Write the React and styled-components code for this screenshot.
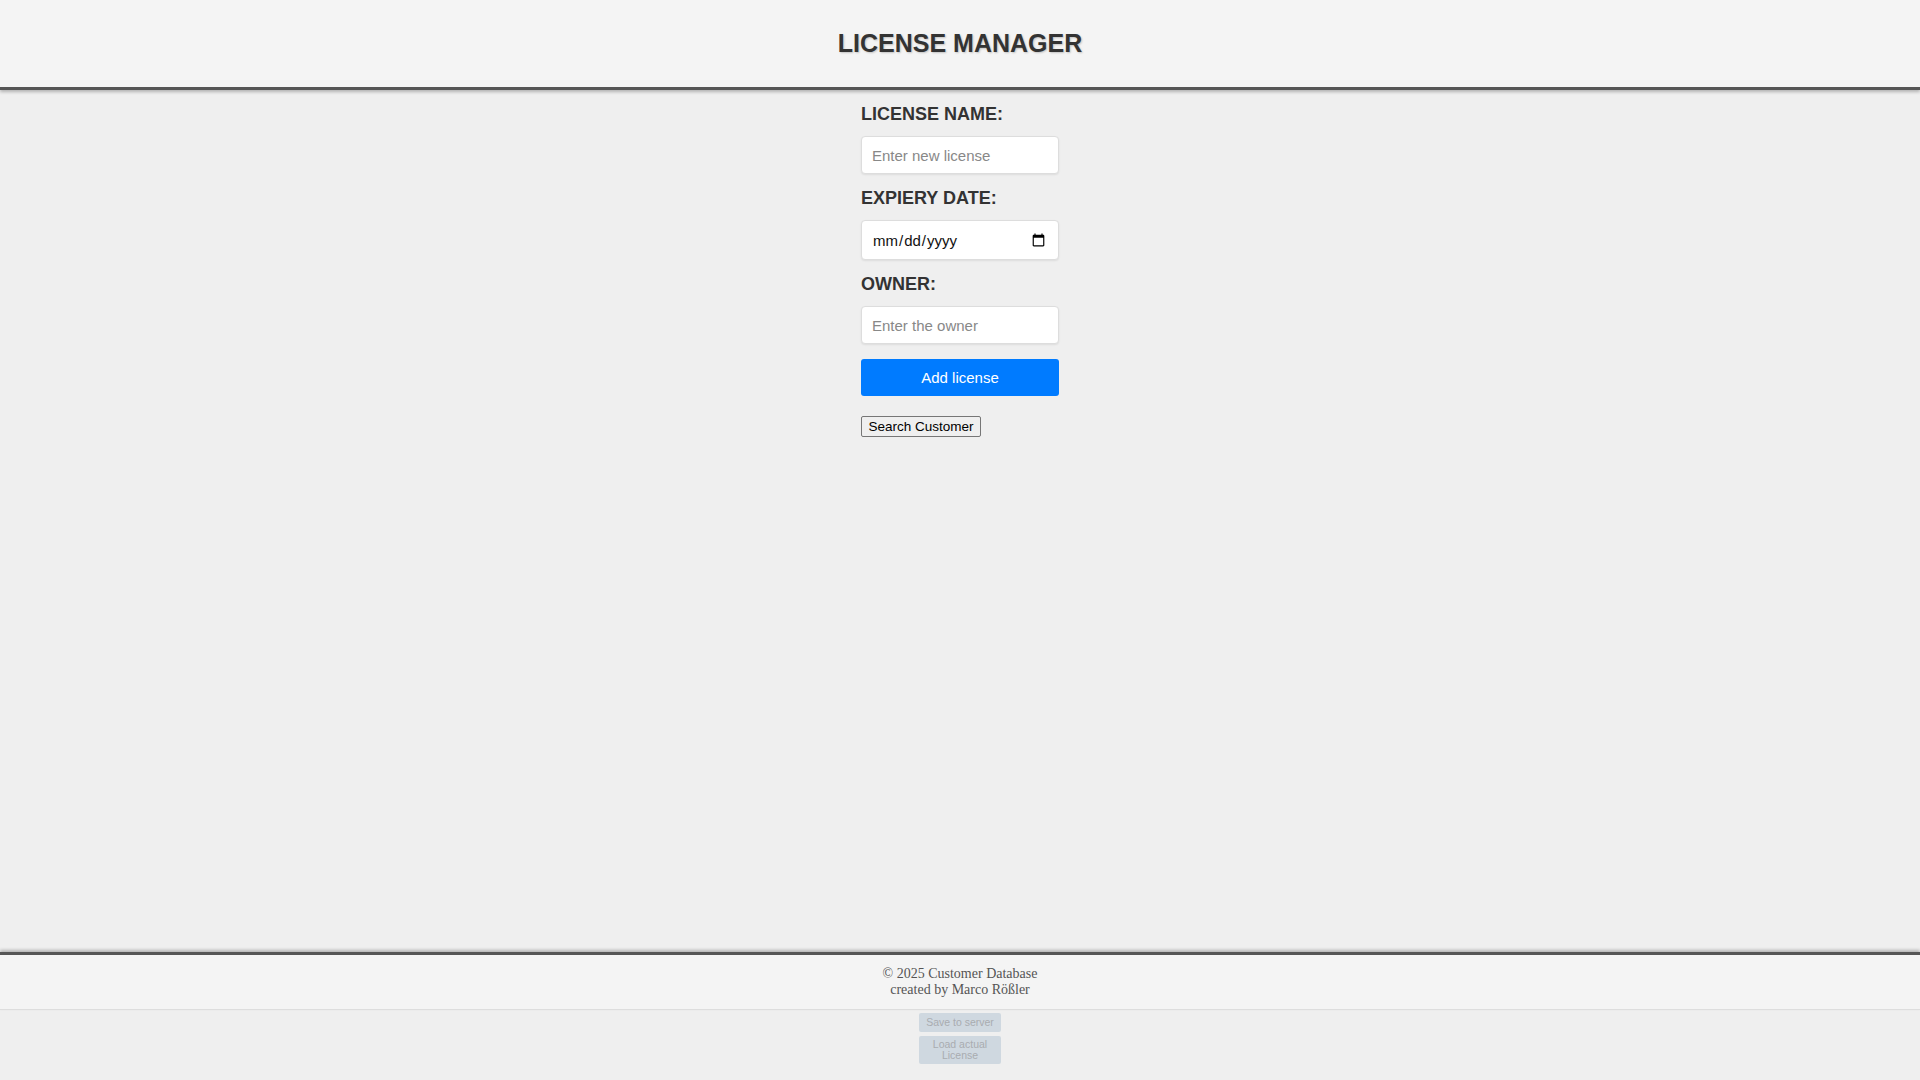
import React from "react";
import styled, { createGlobalStyle } from "styled-components";

const Global = createGlobalStyle`
  html, body { margin: 0; padding: 0; background: #efefef; font-family: "Liberation Sans", Arial, sans-serif; }
  * { box-sizing: border-box; }
`;

const Page = styled.div`
  min-height: 100vh; display: flex; flex-direction: column;
`;
const Header = styled.header`
  height: 90px; background: #f4f4f4; border-bottom: 3px solid #555;
  box-shadow: 0 2px 3px rgba(0,0,0,0.25);
  display: flex; align-items: center; justify-content: center;
`;
const Title = styled.h1`
  margin: 0; font-size: 25px; font-weight: bold; color: #333;
  text-shadow: 1px 1px 2px rgba(0,0,0,0.2);
`;
const Main = styled.main`
  flex: 1; display: flex; justify-content: center; padding-top: 14px;
`;
const Form = styled.div`
  width: 198px; display: flex; flex-direction: column;
`;
const Label = styled.label`
  font-size: 18px; font-weight: bold; color: #333; margin-bottom: 12px; line-height: 20px;
`;
const Input = styled.input`
  height: ${p => p.$h || 38}px; width: 100%; border: 1px solid #ddd; border-radius: 4px;
  background: #fff; padding: 0 10px; font-size: 15px; font-family: "Liberation Sans", Arial, sans-serif;
  margin-bottom: 14px; box-shadow: 0 1px 2px rgba(0,0,0,0.08); color: #111;
  &::placeholder { color: #888; }
`;
const AddButton = styled.button`
  height: 37px; background: #007bff; color: #fff; border: none; border-radius: 3px;
  font-size: 15px; font-family: "Liberation Sans", Arial, sans-serif; margin-top: 1px; margin-bottom: 20px;
`;
const SearchButton = styled.button`
  align-self: flex-start; width: 120px; height: 21px; padding: 0; font-size: 13.5px;
  font-family: "Liberation Sans", Arial, sans-serif; background: #efefef; color: #000;
  border: 1px solid #767676; border-radius: 2px;
`;
const Footer = styled.footer`
  background: #f4f4f4; border-top: 3px solid #555; box-shadow: 0 -2px 3px rgba(0,0,0,0.25);
  border-bottom: 1px solid #ddd; height: 58px; display: flex; flex-direction: column;
  align-items: center; justify-content: center;
  font-family: "Liberation Serif", "Times New Roman", serif; font-size: 14px; color: #555; line-height: 16px;
`;
const Tools = styled.div`
  display: flex; flex-direction: column; align-items: center; gap: 4px; padding: 3px 0 16px;
`;
const ToolButton = styled.button`
  width: 82px; min-height: 19px; background: #cfd8e0; color: #a9acb0; border: none; border-radius: 2px;
  font-size: 10.5px; font-family: "Liberation Sans", Arial, sans-serif; line-height: 11px; padding: 3px 6px;
`;

export default function App() {
  return (
    <Page>
      <Global />
      <Header><Title>LICENSE MANAGER</Title></Header>
      <Main>
        <Form>
          <Label>LICENSE NAME:</Label>
          <Input placeholder="Enter new license" />
          <Label>EXPIERY DATE:</Label>
          <Input type="date" $h={40} />
          <Label>OWNER:</Label>
          <Input placeholder="Enter the owner" />
          <AddButton>Add license</AddButton>
          <SearchButton>Search Customer</SearchButton>
        </Form>
      </Main>
      <Footer>
        <div>© 2025 Customer Database</div>
        <div>created by Marco Rößler</div>
      </Footer>
      <Tools>
        <ToolButton>Save to server</ToolButton>
        <ToolButton>Load actual License</ToolButton>
      </Tools>
    </Page>
  );
}
